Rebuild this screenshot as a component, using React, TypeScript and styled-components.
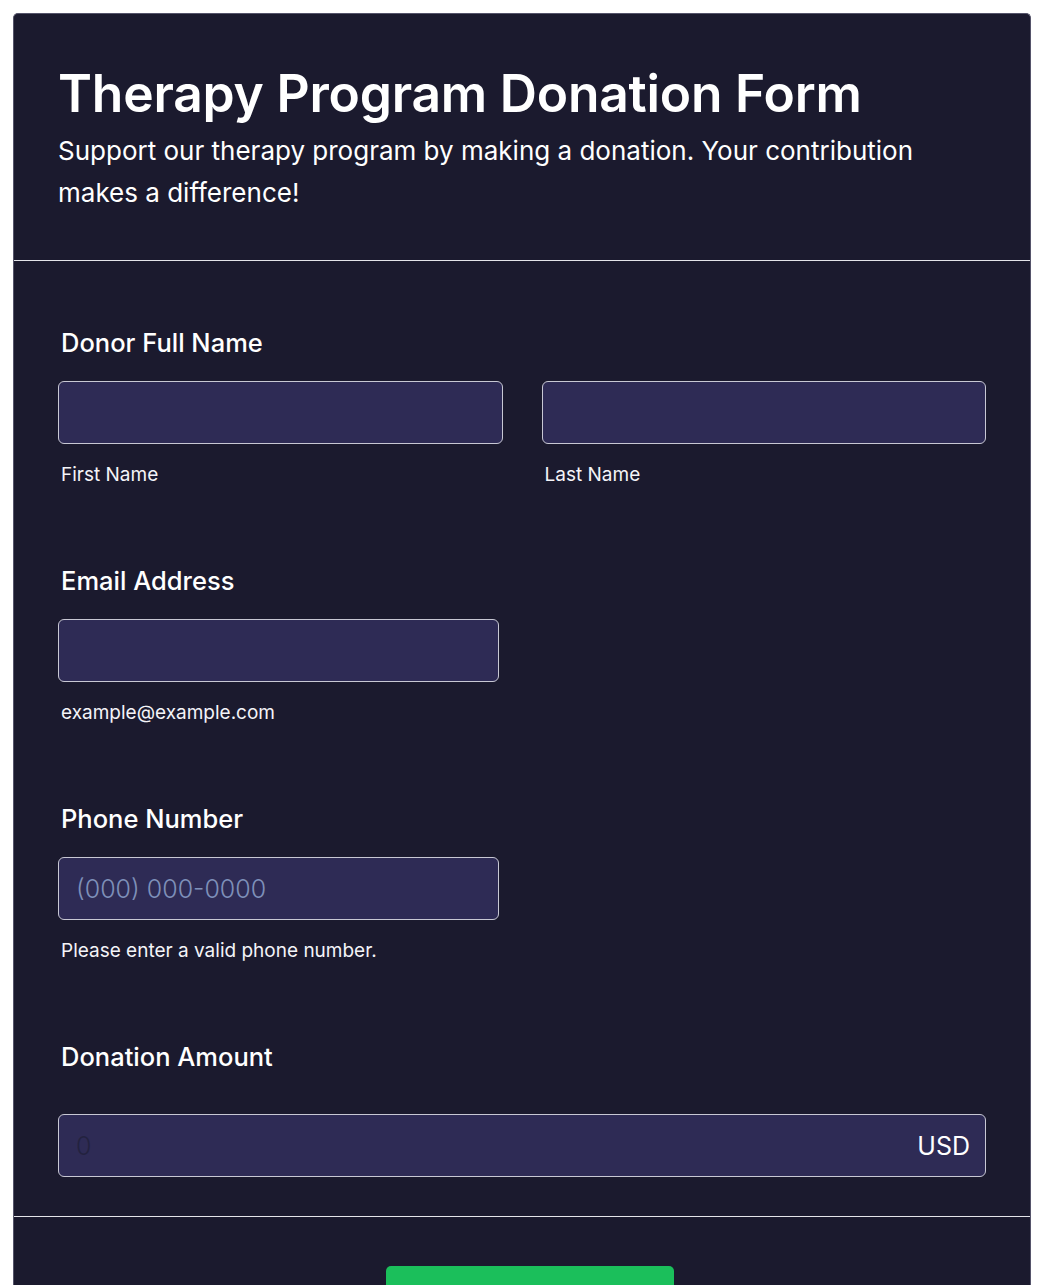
import React from 'react';
import styled, { createGlobalStyle } from 'styled-components';

const GlobalStyle = createGlobalStyle`
    * { box-sizing: border-box; }
    body {
        margin: 0;
        background: #ffffff;
        font-family: Inter, "Noto Sans", sans-serif;
    }
`;

const Card = styled.form`
    margin: 13px 13px 0;
    background: #1b1a2e;
    border: 1px solid #55546a;
    border-bottom: none;
    border-radius: 5px 5px 0 0;
    color: #ffffff;
    min-height: 1300px;
`;

const Header = styled.header`
    padding: 48px 80px 46px 44px;
    border-bottom: 1px solid #e4e4ea;
`;

const Title = styled.h1`
    margin: 0;
    font-size: 51.5px;
    line-height: 62px;
    font-weight: 600;
    letter-spacing: -0.2px;
`;

const Subtitle = styled.p`
    margin: 6px 0 0;
    font-size: 26px;
    line-height: 42px;
    font-weight: 400;
`;

const Body = styled.div`
    padding: 67px 44px 39px;
    display: flex;
    flex-direction: column;
    gap: 79px;
    border-bottom: 1px solid #e4e4ea;
`;

const Field = styled.div`
    display: flex;
    flex-direction: column;
`;

const Label = styled.label<{ $gap?: number }>`
    display: block;
    padding-left: 3px;
    margin-bottom: ${p => p.$gap ?? 23}px;
    font-size: 25.5px;
    line-height: 30px;
    font-weight: 500;
`;

const Row = styled.div`
    display: grid;
    grid-template-columns: 1fr 1fr;
    gap: 39px;
`;

const Col = styled.div`
    display: flex;
    flex-direction: column;
`;

const InputWrap = styled.div<{ $width?: string }>`
    position: relative;
    width: ${p => p.$width ?? '100%'};
`;

const TextInput = styled.input`
    display: block;
    width: 100%;
    height: 63px;
    padding: 0 17px;
    background: #2e2b55;
    border: 1px solid #c8c8d4;
    border-radius: 6px;
    color: #ffffff;
    font-family: Inter, "Noto Sans", sans-serif;
    font-size: 25px;
    font-weight: 300;
    outline: none;

    &::placeholder {
        color: #7e90b9;
    }
`;

const AmountInput = styled(TextInput)`
    padding-right: 90px;

    &::placeholder {
        color: #23223f;
    }
`;

const Currency = styled.span`
    position: absolute;
    right: 16px;
    top: 50%;
    transform: translateY(-50%);
    font-size: 25px;
    line-height: 30px;
`;

const SubLabel = styled.span`
    display: block;
    margin-top: 19px;
    padding-left: 3px;
    font-size: 19px;
    line-height: 24px;
    color: #f4f4f8;
`;

const Footer = styled.div`
    display: flex;
    justify-content: center;
    padding: 49px 0 40px 16px;
`;

const SubmitButton = styled.button`
    width: 288px;
    height: 60px;
    border: none;
    border-radius: 5px;
    background: #1bbf5b;
    color: #ffffff;
    font-family: Inter, "Noto Sans", sans-serif;
    font-size: 22px;
    font-weight: 600;
`;

export default function App() {
    return (
        <>
            <GlobalStyle />
            <Card onSubmit={e => e.preventDefault()}>
                <Header>
                    <Title>Therapy Program Donation Form</Title>
                    <Subtitle>
                        Support our therapy program by making a donation. Your contribution makes a difference!
                    </Subtitle>
                </Header>
                <Body>
                    <Field>
                        <Label>Donor Full Name</Label>
                        <Row>
                            <Col>
                                <TextInput type="text" />
                                <SubLabel>First Name</SubLabel>
                            </Col>
                            <Col>
                                <TextInput type="text" />
                                <SubLabel>Last Name</SubLabel>
                            </Col>
                        </Row>
                    </Field>
                    <Field>
                        <Label>Email Address</Label>
                        <InputWrap $width="441px">
                            <TextInput type="email" />
                        </InputWrap>
                        <SubLabel>example@example.com</SubLabel>
                    </Field>
                    <Field>
                        <Label>Phone Number</Label>
                        <InputWrap $width="441px">
                            <TextInput type="tel" placeholder="(000) 000-0000" />
                        </InputWrap>
                        <SubLabel>Please enter a valid phone number.</SubLabel>
                    </Field>
                    <Field>
                        <Label $gap={42}>Donation Amount</Label>
                        <InputWrap>
                            <AmountInput type="text" placeholder="0" />
                            <Currency>USD</Currency>
                        </InputWrap>
                    </Field>
                </Body>
                <Footer>
                    <SubmitButton type="submit">Donate</SubmitButton>
                </Footer>
            </Card>
        </>
    );
}
